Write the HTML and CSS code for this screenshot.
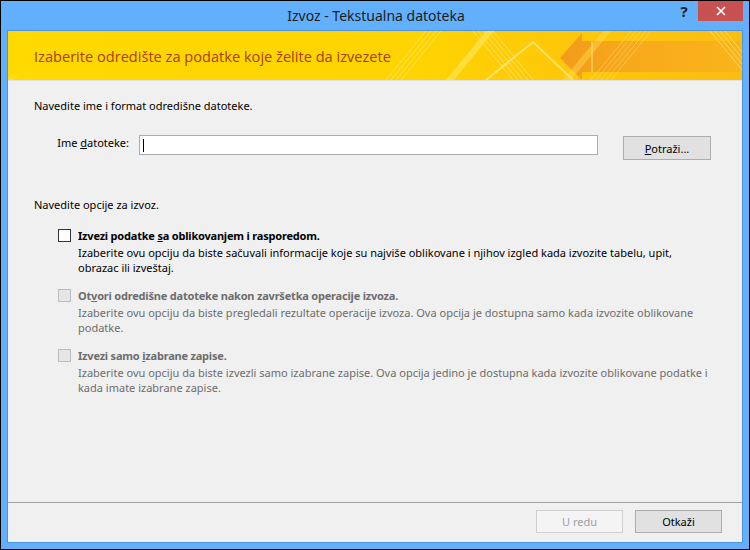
FILE: index.html
```html
<!DOCTYPE html>
<html lang="sr">
<head>
<meta charset="utf-8">
<title>Izvoz - Tekstualna datoteka</title>
<link rel="stylesheet" href="styles.css">
</head>
<body>
<div class="window">
  <div class="titlebar">
    <span class="title">Izvoz - Tekstualna datoteka</span>
    <span class="help">?</span>
    <span class="close">
      <svg width="10" height="10" viewBox="0 0 10 10"><path d="M1 1L9 9M9 1L1 9" stroke="#fff" stroke-width="1.7" fill="none"/></svg>
    </span>
  </div>
  <div class="client">
    <div class="banner">
      <svg class="banner-art" width="734" height="49" viewBox="0 0 734 49">
        <defs>
          <linearGradient id="bg" x1="0" y1="0" x2="1" y2="0">
            <stop offset="0" stop-color="#ffd900"/>
            <stop offset="0.55" stop-color="#ffd400"/>
            <stop offset="0.75" stop-color="#fec80a"/>
            <stop offset="1" stop-color="#fcbd12"/>
          </linearGradient>
          <linearGradient id="arrow" x1="0" y1="0" x2="1" y2="0">
            <stop offset="0" stop-color="#f49a1c"/>
            <stop offset="0.35" stop-color="#f7a81b"/>
            <stop offset="1" stop-color="#fab51a"/>
          </linearGradient>
        </defs>
        <rect width="734" height="49" fill="url(#bg)"/>
        <path d="M438 49L478 0L486 0L446 49Z" fill="#ffe455" opacity="0.7"/>
        <path d="M552 27L574 2L574 10L734 10L734 41L574 41L574 49Z" fill="url(#arrow)"/>
        <path d="M584 10L584 41" stroke="#fcc545" stroke-width="2"/>
        <g stroke="#ffe680" stroke-width="1" opacity="0.7">
          <path d="M0 47L3 44M0 50L6 44M3 50L9 44"/>
          <path d="M378 49L418 0M383 49L423 0M388 49L428 0M393 49L433 0"/>
          <path d="M465 0L505 49M470 0L510 49M475 0L515 49M480 0L520 49M485 0L525 49"/>
          <path d="M702 0L734 39M707 0L734 33M712 0L734 27M717 0L734 21"/>
        </g>
        <g stroke="#ffe680" stroke-width="1" opacity="0.45">
          <path d="M583 49L623 0M588 49L628 0M593 49L633 0M598 49L638 0M603 49L643 0"/>
        </g>
        <path d="M555 49L595 0L603 0L563 49Z" fill="#ffe455" opacity="0.4"/>
        <path d="M478 49L525 11L565 49" stroke="#ffe570" stroke-width="2" fill="none" opacity="0.9"/>
      </svg>
      <h1 class="banner-title">Izaberite odredište za podatke koje želite da izvezete</h1>
    </div>
    <div class="content">
      <p class="section">Navedite ime i format odredišne datoteke.</p>
      <div class="file-row">
        <label class="file-label">Ime <u>d</u>atoteke:</label>
        <div class="field"><span class="caret"></span></div>
        <button class="btn browse"><u>P</u>otraži...</button>
      </div>
      <p class="section opts-title">Navedite opcije za izvoz.</p>
      <div class="option">
        <span class="check"></span>
        <div class="opt-text">
          <div class="opt-label">Izvezi podatke <u>s</u>a oblikovanjem i rasporedom.</div>
          <div class="opt-desc">Izaberite ovu opciju da biste sačuvali informacije koje su najviše oblikovane i njihov izgled kada izvozite tabelu, upit,<br>obrazac ili izveštaj.</div>
        </div>
      </div>
      <div class="option disabled">
        <span class="check"></span>
        <div class="opt-text">
          <div class="opt-label">Ot<u>v</u>ori odredišne datoteke nakon završetka operacije izvoza.</div>
          <div class="opt-desc">Izaberite ovu opciju da biste pregledali rezultate operacije izvoza. Ova opcija je dostupna samo kada izvozite oblikovane<br>podatke.</div>
        </div>
      </div>
      <div class="option disabled">
        <span class="check"></span>
        <div class="opt-text">
          <div class="opt-label">Izvezi samo <u>i</u>zabrane zapise.</div>
          <div class="opt-desc">Izaberite ovu opciju da biste izvezli samo izabrane zapise. Ova opcija jedino je dostupna kada izvozite oblikovane podatke i<br>kada imate izabrane zapise.</div>
        </div>
      </div>
    </div>
    <div class="footer">
      <button class="btn btn-disabled">U redu</button>
      <button class="btn">Otkaži</button>
    </div>
  </div>
</div>
</body>
</html>
```

FILE: styles.css
```css
* { box-sizing: border-box; }
html, body { margin: 0; padding: 0; }
body {
  font-family: "Noto Sans", "Open Sans", sans-serif;
  font-size: 11px;
  line-height: 15px;
  color: #000;
  background: #62b0fc;
}
.window {
  width: 750px;
  height: 550px;
  border: 1px solid #000;
  background: #62b0fc;
  padding: 0 6px 6px;
  display: flex;
  flex-direction: column;
}
.titlebar {
  height: 29px;
  display: flex;
  align-items: center;
  justify-content: center;
  position: relative;
  flex: none;
}
.title {
  font-size: 14px;
  color: #1c1c1c;
  margin-left: 2px;
}
.help {
  position: absolute;
  top: 0;
  right: 46px;
  width: 26px;
  height: 21px;
  display: flex;
  align-items: center;
  justify-content: center;
  font-weight: 700;
  font-size: 15px;
  color: #222;
}
.close {
  position: absolute;
  top: 0;
  right: 0;
  width: 45px;
  height: 20px;
  background: #c75050;
  display: flex;
  align-items: center;
  justify-content: center;
}
.close svg { display: block; }
.client {
  flex: 1;
  border: 1px solid #4f95dc;
  background: #f0f0f0;
  display: flex;
  flex-direction: column;
}
.banner {
  position: relative;
  height: 50px;
  flex: none;
  border-bottom: 1px solid #e2e2e2;
  display: flex;
  align-items: center;
  padding: 2px 0 0 26px;
  overflow: hidden;
}
.banner-art {
  position: absolute;
  left: 0;
  top: 0;
  display: block;
}
.banner-title {
  position: relative;
  margin: 0;
  font-family: "Open Sans", "Noto Sans", sans-serif;
  font-size: 14.6px;
  font-weight: 400;
  color: #a8400b;
}
.content {
  flex: 1;
  padding: 17px 0 0 26px;
}
.section { margin: 0; }
.file-row {
  display: flex;
  align-items: flex-start;
  margin-top: 22px;
}
.file-label {
  width: 95px;
  text-align: right;
}
.field {
  width: 459px;
  height: 20px;
  margin-left: 10px;
  background: #fff;
  border: 1px solid #abadb3;
}
.caret {
  display: block;
  width: 1px;
  height: 13px;
  background: #000;
  margin: 3px 0 0 3px;
}
.btn {
  font: inherit;
  color: #000;
  width: 87px;
  height: 23px;
  padding: 0;
  background: #e1e1e1;
  border: 1px solid #adadad;
  border-radius: 0;
  line-height: 19px;
}
.browse {
  width: 88px;
  height: 24px;
  margin: 1px 0 0 25px;
}
.opts-title { margin-top: 37px; }
.option {
  display: flex;
  align-items: flex-start;
  margin-top: 16px;
  padding-left: 24px;
}
.option + .option { margin-top: 13px; }
.check {
  flex: none;
  width: 13px;
  height: 13px;
  background: #fff;
  border: 1px solid #333;
  margin-top: 1px;
}
.opt-text { margin-left: 7px; }
.opt-label {
  font-weight: 700;
  letter-spacing: -0.2px;
  white-space: nowrap;
}
.opt-desc {
  margin-top: 2px;
  white-space: nowrap;
}
.disabled { color: #6d6d6d; }
.disabled .check {
  background: #e6e6e6;
  border-color: #bcbcbc;
}
.footer {
  flex: none;
  border-top: 1px solid #a0a0a0;
  display: flex;
  justify-content: flex-end;
  gap: 12px;
  padding: 7px 20px 9px 0;
}
.btn-disabled {
  background: #f4f4f4;
  border-color: #cfcfcf;
  color: #a0a0a0;
}
```
